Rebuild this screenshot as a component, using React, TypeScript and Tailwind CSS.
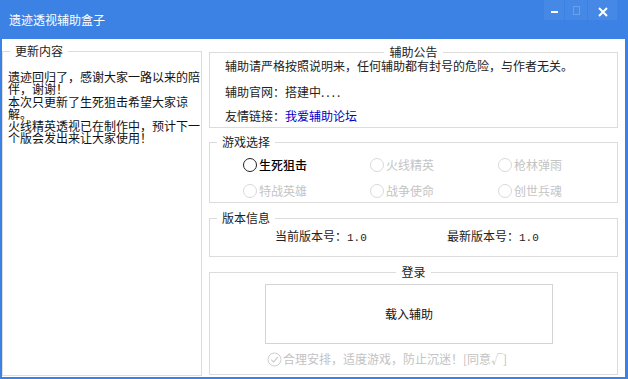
import type { ReactNode } from "react";

function Group({ title, center, className, children }: { title: string; center?: boolean; className?: string; children: ReactNode }) {
  return (
    <fieldset className={`border border-[#dcdcdc] ${className ?? ""}`}>
      <legend className={`px-[5px] text-[12px] leading-[12px] text-[#222] ${center ? "mx-auto" : "ml-[7px]"}`}>{title}</legend>
      {children}
    </fieldset>
  );
}

function Radio({ label, active }: { label: string; active?: boolean }) {
  return (
    <div className="flex h-[18px] items-center">
      <span className={`h-[14px] w-[14px] rounded-full border ${active ? "border-[#222]" : "border-[#d9d9d9]"}`} />
      <span className={`ml-[2px] text-[12px] leading-[14px] ${active ? "font-medium text-black" : "text-[#c4c4c4]"}`}>{label}</span>
    </div>
  );
}

export default function App() {
  return (
    <div className="flex h-[379px] w-[628px] flex-col bg-[#3b82e4] font-['Noto_Sans_CJK_SC','Microsoft_YaHei',sans-serif]">
      {/* title bar */}
      <div className="flex h-[39px] shrink-0 items-start justify-between">
        <div className="mt-[13px] pl-[9px] text-[12px] leading-[14px] text-white">遗迹透视辅助盒子</div>
        <div className="mr-[11px] flex h-[20px]">
          <div className="flex w-[20px] items-center justify-center bg-white/5">
            <span className="mt-[4px] h-[2px] w-[7px] bg-white" />
          </div>
          <div className="ml-px flex w-[22px] items-center justify-center bg-white/5">
            <span className="h-[9px] w-[7px] border border-white/20" />
          </div>
          <div className="ml-px flex w-[29px] items-center justify-center bg-white/5">
            <svg width="10" height="10" viewBox="0 0 10 10" className="mt-[3px]">
              <path d="M1 1L9 9M9 1L1 9" stroke="white" strokeWidth="2" />
            </svg>
          </div>
        </div>
      </div>

      {/* body */}
      <div className="mb-[2px] ml-[2px] mr-[3px] flex flex-1 bg-white">
        <div className="flex w-[200px] flex-col pb-[1px] pt-[6px]">
          <Group title="更新内容" className="flex-1">
            <div className="pl-[5px] pt-[14px] text-[12px] leading-[12.3px] whitespace-nowrap text-[#111]">
              <div>遗迹回归了，感谢大家一路以来的陪</div>
              <div>伴，谢谢！</div>
              <div>本次只更新了生死狙击希望大家谅</div>
              <div>解。</div>
              <div>火线精英透视已在制作中，预计下一</div>
              <div>个版会发出来让大家使用！</div>
            </div>
          </Group>
        </div>

        <div className="ml-[7px] flex w-[409px] flex-col pt-[7px]">
          <Group title="辅助公告" center className="h-[82px]">
            <div className="pl-[15px] text-[12px] leading-[14px] text-[#222]">
              <div className="mt-[1px]">辅助请严格按照说明来，任何辅助都有封号的危险，与作者无关。</div>
              <div className="mt-[12px]">
                辅助官网：搭建中<span className="tracking-[2px]">....</span>
              </div>
              <div className="mt-[10px]">
                友情链接：<span className="text-[#0000c8]">我爱辅助论坛</span>
              </div>
            </div>
          </Group>

          <Group title="游戏选择" className="mt-[8px] h-[67px]">
            <div className="grid grid-cols-[127px_128px_1fr] gap-y-[8px] pl-[33px] pt-[8px]">
              <Radio label="生死狙击" active />
              <Radio label="火线精英" />
              <Radio label="枪林弹雨" />
              <Radio label="特战英雄" />
              <Radio label="战争使命" />
              <Radio label="创世兵魂" />
            </div>
          </Group>

          <Group title="版本信息" className="mt-[9px] h-[45px]">
            <div className="flex pl-[65px] pt-[5px] text-[12px] leading-[14px] text-[#222]">
              <div className="w-[172px]">
                当前版本号：<span className="font-['Liberation_Mono',monospace] text-[11px]">1.0</span>
              </div>
              <div>
                最新版本号：<span className="font-['Liberation_Mono',monospace] text-[11px]">1.0</span>
              </div>
            </div>
          </Group>

          <Group title="登录" center className="mt-[9px] h-[109px]">
            <div className="pl-[55px] pt-[6px]">
              <div className="flex h-[60px] w-[288px] items-center justify-center border border-[#d4d4d4] text-[12px] text-[#111]">
                载入辅助
              </div>
              <div className="mt-[8px] flex h-[14px] items-center pl-[2px]">
                <svg width="15" height="15" viewBox="0 0 15 15">
                  <circle cx="7.5" cy="7.5" r="6.5" fill="none" stroke="#cfcfcf" strokeWidth="1" />
                  <path d="M4.2 7.6L6.6 10L10.8 5" fill="none" stroke="#cfcfcf" strokeWidth="1.2" />
                </svg>
                <span className="ml-px text-[12px] leading-[14px] text-[#c2c2c2]">合理安排，适度游戏，防止沉迷！[同意√]</span>
              </div>
            </div>
          </Group>
        </div>
      </div>
    </div>
  );
}
